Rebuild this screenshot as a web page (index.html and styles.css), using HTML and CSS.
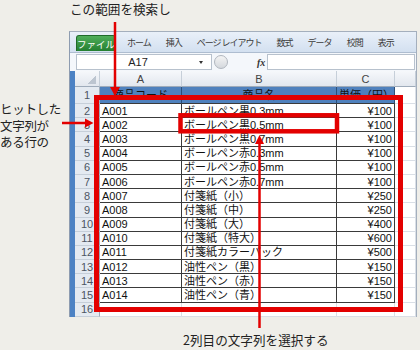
FILE: index.html
```html
<!DOCTYPE html>
<html lang="ja">
<head>
    <meta charset="UTF-8">
    <title>範囲を検索して選択</title>
    <link rel="stylesheet" href="styles.css">
</head>
<body>
    <div class="stage">
        <p class="note note-top">この範囲を検索し</p>

        <div class="middle">
            <div class="note note-left">
                <span class="line">ヒットした</span>
                <span class="line">文字列が</span>
                <span class="line">ある行の</span>
            </div>

            <div class="excel">
                <div class="ribbon">
                    <span class="tab tab-file">ファイル</span>
                    <span class="tab">ホーム</span>
                    <span class="tab">挿入</span>
                    <span class="tab">ページ レイアウト</span>
                    <span class="tab">数式</span>
                    <span class="tab">データ</span>
                    <span class="tab">校閲</span>
                    <span class="tab">表示</span>
                </div>

                <div class="formula">
                    <div class="name-box"><span class="ref">A17</span><span class="caret"></span></div>
                    <div class="buttons"><span class="pill"></span><span class="fx">fx</span></div>
                    <div class="input"></div>
                </div>

                <div class="grid">
                    <table class="sheet">
                        <colgroup>
                            <col class="col-num">
                            <col class="col-a">
                            <col class="col-b">
                            <col class="col-c">
                            <col>
                        </colgroup>
                        <tr class="letters"><th class="corner"></th><th>A</th><th>B</th><th>C</th><th></th></tr>
                        <tr class="title"><th class="num">1</th><td>商品コード</td><td>商品名</td><td>単価（円）</td><td class="blank"></td></tr>
                        <tr class="row"><th class="num">2</th><td>A001</td><td>ボールペン黒0.3mm</td><td class="price">¥100</td><td class="blank"></td></tr>
                        <tr class="row"><th class="num">3</th><td>A002</td><td>ボールペン黒0.5mm</td><td class="price">¥100</td><td class="blank"></td></tr>
                        <tr class="row"><th class="num">4</th><td>A003</td><td>ボールペン黒0.7mm</td><td class="price">¥100</td><td class="blank"></td></tr>
                        <tr class="row"><th class="num">5</th><td>A004</td><td>ボールペン赤0.3mm</td><td class="price">¥100</td><td class="blank"></td></tr>
                        <tr class="row"><th class="num">6</th><td>A005</td><td>ボールペン赤0.5mm</td><td class="price">¥100</td><td class="blank"></td></tr>
                        <tr class="row"><th class="num">7</th><td>A006</td><td>ボールペン赤0.7mm</td><td class="price">¥100</td><td class="blank"></td></tr>
                        <tr class="row"><th class="num">8</th><td>A007</td><td>付箋紙（小）</td><td class="price">¥250</td><td class="blank"></td></tr>
                        <tr class="row"><th class="num">9</th><td>A008</td><td>付箋紙（中）</td><td class="price">¥250</td><td class="blank"></td></tr>
                        <tr class="row"><th class="num">10</th><td>A009</td><td>付箋紙（大）</td><td class="price">¥400</td><td class="blank"></td></tr>
                        <tr class="row"><th class="num">11</th><td>A010</td><td>付箋紙（特大）</td><td class="price">¥600</td><td class="blank"></td></tr>
                        <tr class="row"><th class="num">12</th><td>A011</td><td>付箋紙カラーパック</td><td class="price">¥500</td><td class="blank"></td></tr>
                        <tr class="row"><th class="num">13</th><td>A012</td><td>油性ペン（黒）</td><td class="price">¥150</td><td class="blank"></td></tr>
                        <tr class="row"><th class="num">14</th><td>A013</td><td>油性ペン（赤）</td><td class="price">¥150</td><td class="blank"></td></tr>
                        <tr class="row"><th class="num">15</th><td>A014</td><td>油性ペン（青）</td><td class="price">¥150</td><td class="blank"></td></tr>
                        <tr class="row empty"><th class="num">16</th><td class="blank"></td><td class="blank"></td><td class="blank"></td><td class="blank"></td></tr>
                    </table>
                </div>
            </div>
        </div>

        <p class="note note-bottom">2列目の文字列を選択する</p>

        <!-- 赤枠と矢印 -->
        <svg class="marks" width="420" height="350" viewBox="0 0 420 350">
            <g fill="none" stroke="#e30000">
                <rect x="96.5" y="97.5" width="304" height="212" stroke-width="5"/>
                <rect x="180.5" y="115.3" width="156.5" height="16" stroke-width="4.5"/>
                <line x1="115" y1="22" x2="115" y2="89" stroke-width="2.5"/>
                <line x1="62" y1="123" x2="86" y2="123" stroke-width="2.5"/>
                <line x1="259.5" y1="328" x2="259.5" y2="142" stroke-width="2.5"/>
            </g>
            <g fill="#e30000">
                <polygon points="110,87 120,87 115,96"/>
                <polygon points="85,118.5 85,127.5 93.5,123"/>
                <polygon points="255,144 264,144 259.5,135"/>
            </g>
        </svg>
    </div>
</body>
</html>
```

FILE: styles.css
```css
/* ページ全体 */
body {
    margin: 0;
    background: #efeee9;
}

.stage {
    position: relative;
    width: 420px;
    height: 350px;
    overflow: hidden;
    background: #efeee9;
    font-family: "Noto Sans CJK JP", sans-serif;
    color: #222;
}

.note {
    margin: 0;
    font-size: 12.6px;
}

.note-top {
    height: 31px;
    padding-left: 70px;
    line-height: 18px;
}

.middle {
    display: flex;
    height: 286px;
}

.note-left {
    width: 69px;
    flex: none;
    padding-top: 70px;
    font-size: 12.5px;
    letter-spacing: -0.3px;
}

.note-left .line {
    display: block;
    height: 16.5px;
    line-height: 16.5px;
}

.note-bottom {
    padding: 14px 0 0 183px;
    line-height: 18px;
}

/* Excel ウィンドウ */
.excel {
    width: 348px;
    flex: none;
    box-sizing: border-box;
    border-top: 1px solid #a4afbd;
    border-right: 1px solid #a4afbd;
    border-left: 1px solid #8e9cb0;
    background: #f4f7fb;
    display: flex;
    flex-direction: column;
}

.ribbon {
    height: 21px;
    display: flex;
    align-items: flex-end;
    gap: 15px;
    padding-left: 6px;
    background: linear-gradient(#e9f0f9, #d3e0f0);
    border-bottom: 1px solid #aebdd0;
    box-sizing: border-box;
}

.tab {
    font-size: 9px;
    letter-spacing: -1px;
    line-height: 16px;
    color: #3b3b3b;
    margin-bottom: 1px;
}

.tab-file {
    width: 40px;
    height: 16px;
    margin-right: -4px;
    text-align: center;
    color: #fff;
    font-size: 9.5px;
    letter-spacing: 0;
    background: linear-gradient(#4fae5a, #247f31);
    border: 1px solid #1f6a2a;
    border-bottom: none;
    border-radius: 3px 3px 0 0;
    box-sizing: border-box;
}

.formula {
    height: 18px;
    display: flex;
    align-items: center;
    padding: 0 1px 0 6px;
    background: #f4f7fb;
}

.name-box {
    width: 136px;
    height: 16px;
    box-sizing: border-box;
    display: flex;
    align-items: center;
    background: #fff;
    border: 1px solid #b7c1cd;
    font-family: "Liberation Sans", sans-serif;
    font-size: 11px;
    color: #222;
}

.ref {
    flex: 1;
    text-align: center;
}

.caret {
    width: 0;
    height: 0;
    margin-right: 8px;
    border-left: 2.5px solid transparent;
    border-right: 2.5px solid transparent;
    border-top: 3px solid #333;
}

.buttons {
    width: 55px;
    display: flex;
    align-items: center;
}

.pill {
    width: 12px;
    height: 12px;
    margin-left: 2px;
    border-radius: 50%;
    background: linear-gradient(#f4f4f4, #d4d8dd);
    border: 1px solid #b0b6be;
}

.fx {
    margin-left: 29px;
    font-family: "Liberation Serif", serif;
    font-style: italic;
    font-weight: bold;
    font-size: 10px;
    color: #333;
}

.input {
    flex: 1;
    height: 16px;
    box-sizing: border-box;
    background: #fff;
    border: 1px solid #b7c1cd;
}

/* シート */
.grid {
    flex: 1;
    border-left: 5px solid #4c82c4;
    box-shadow: inset 2px 0 0 #2c5ea0;
    background: #fff;
}

.sheet {
    table-layout: fixed;
    width: 100%;
    border-collapse: separate;
    border-spacing: 0;
    font-family: "Liberation Sans", "Noto Sans CJK JP", sans-serif;
    font-size: 11px;
}

.col-num { width: 25px; }
.col-a { width: 82px; }
.col-b { width: 155px; }
.col-c { width: 58px; }

.sheet th,
.sheet td {
    padding: 0 2px;
    line-height: 12px;
    white-space: nowrap;
    overflow: hidden;
    border-right: 1px solid #3a3a3a;
    border-bottom: 1px solid #3a3a3a;
}

.letters { height: 16px; }
.title { height: 17px; }
.row { height: 14.2px; }

.letters th {
    font-weight: normal;
    color: #444;
    background: linear-gradient(#f6f8fb, #e2e7ee);
    border-right: 1px solid #c6cfd9;
    border-bottom: 1px solid #9eabba;
}

.letters .corner {
    background: linear-gradient(to bottom right, transparent 50%, #bcc5d0 50%) no-repeat right 3px bottom 2px / 8px 8px,
                linear-gradient(#f6f8fb, #e2e7ee);
}

.num {
    font-weight: normal;
    text-align: center;
    color: #4d5663;
    background: #e4eaf1;
    border-right-color: #9eabba !important;
    border-bottom-color: #c6cfd9 !important;
}

.title td {
    text-align: center;
    color: #fff;
    background: #4f81bd;
    border-right-color: #2d4f78;
}

.title td.blank {
    background: #fff;
}

.sheet td {
    color: #111;
}

.price {
    text-align: right;
}

.sheet td.blank {
    border-right-color: #dadfe6;
    border-bottom-color: #dadfe6;
}

.marks {
    position: absolute;
    top: 0;
    left: 0;
    pointer-events: none;
}
```
